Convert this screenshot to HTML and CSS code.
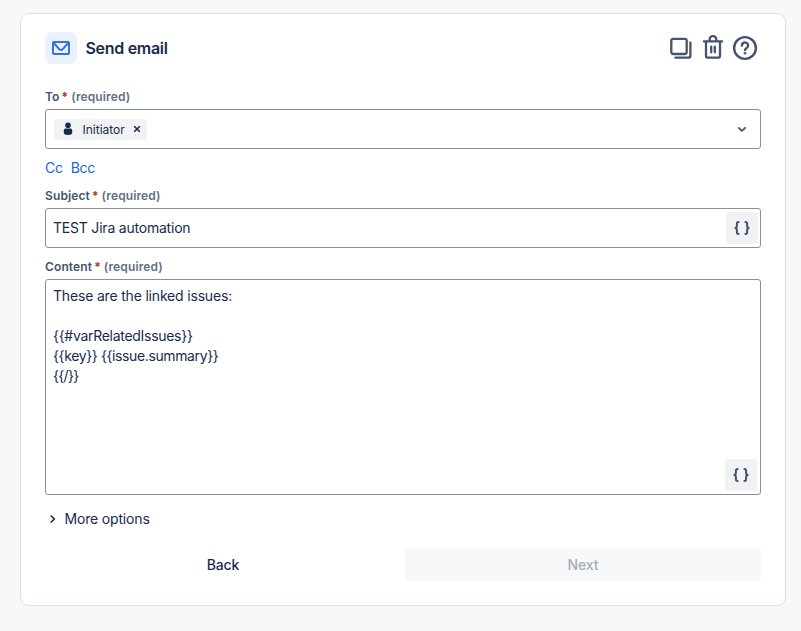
FILE: index.html
```html
<!DOCTYPE html>
<html lang="en">
<head>
<meta charset="utf-8">
<title>Send email</title>
<link rel="stylesheet" href="styles.css">
</head>
<body>
<main class="card">
  <header class="header">
    <span class="mail">
      <svg width="20" height="16" viewBox="0 0 20 16" fill="none" stroke="#3a70dc" stroke-width="2" stroke-linejoin="round"><rect x="2" y="2" width="16" height="12" rx="1"/><path d="M2.5 2.8 8.4 9.2Q10 10.7 11.6 9.2L17.5 2.8"/></svg>
    </span>
    <h1 class="title">Send email</h1>
    <div class="actions">
      <svg width="24" height="24" viewBox="0 0 24 24" fill="none" stroke="#44546f" stroke-width="2.3" stroke-linecap="round" stroke-linejoin="round"><rect x="2.3" y="2.8" width="15.4" height="15.2" rx="2"/><path d="M21.4 6.6V19.5a2.2 2.2 0 0 1-2.2 2.2H6.4"/></svg>
      <svg width="24" height="26" viewBox="0 0 24 26" fill="none" stroke="#44546f" stroke-width="2.3" stroke-linecap="round" stroke-linejoin="round"><path d="M2.9 6.4H21.1M8.7 6V4.2a3 3 0 0 1 3-3h.6a3 3 0 0 1 3 3V6M5 6.6V20.7a2 2 0 0 0 2 2H17a2 2 0 0 0 2-2V6.6M10.2 11.7v5.6M13.8 11.7v5.6"/></svg>
      <svg width="26" height="26" viewBox="0 0 26 26" fill="none" stroke="#44546f" stroke-width="2.4" stroke-linecap="round" stroke-linejoin="round"><circle cx="13" cy="13" r="10.9"/><path d="M9.9 10.6a3.1 3.1 0 1 1 4.8 2.5C13.5 13.8 13 14.1 13 15.1"/><circle cx="13" cy="18.2" r="1.3" fill="#44546f" stroke="none"/></svg>
    </div>
  </header>

  <div class="label">To<b class="star">*</b><span class="req">(required)</span></div>
  <div class="field">
    <span class="tag">
      <svg width="10" height="14" viewBox="0 0 10 14" fill="#172b4d"><circle cx="5" cy="3.2" r="2.8"/><path d="M.8 8.4Q.8 6.6 2.6 6.6h4.8q1.8 0 1.8 1.8v2.1Q9.2 13 5 13T.8 10.5z"/></svg>
      <span class="tag-text">Initiator</span>
      <svg width="8" height="8" viewBox="0 0 8 8" fill="none" stroke="#172b4d" stroke-width="1.6"><path d="m1.2 1.2 5.6 5.6M6.8 1.2 1.2 6.8"/></svg>
    </span>
    <svg class="chevron" width="10" height="8" viewBox="0 0 10 8" fill="none" stroke="#44546f" stroke-width="1.8" stroke-linecap="round" stroke-linejoin="round"><path d="m1.8 2.9 3.2 3 3.2-3"/></svg>
  </div>
  <div class="links"><a>Cc</a><a>Bcc</a></div>

  <div class="label">Subject<b class="star">*</b><span class="req">(required)</span></div>
  <div class="field subject">
    <span class="subject-text">TEST Jira automation</span>
    <span class="braces"><svg width="18" height="16" viewBox="0 0 18 16" fill="none" stroke="#44546f" stroke-width="2"><path d="M6.4 2H5.6Q3.9 2 3.9 3.7v2.2Q3.9 8 1.6 8q2.3 0 2.3 2.1v2.2Q3.9 14 5.6 14h.8M11.6 2h.8q1.7 0 1.7 1.7v2.2Q14.1 8 16.4 8q-2.3 0-2.3 2.1v2.2q0 1.7-1.7 1.7h-.8"/></svg></span>
  </div>

  <div class="label content-label">Content<b class="star">*</b><span class="req">(required)</span></div>
  <div class="area">
    <div class="area-text"><p class="l1">These are the linked issues:</p><p class="l2">{{#varRelatedIssues}}</p><p class="l3">{{key}} {{issue.summary}}</p><p class="l4">{{/}}</p></div>
    <span class="braces"><svg width="18" height="16" viewBox="0 0 18 16" fill="none" stroke="#44546f" stroke-width="2"><path d="M6.4 2H5.6Q3.9 2 3.9 3.7v2.2Q3.9 8 1.6 8q2.3 0 2.3 2.1v2.2Q3.9 14 5.6 14h.8M11.6 2h.8q1.7 0 1.7 1.7v2.2Q14.1 8 16.4 8q-2.3 0-2.3 2.1v2.2q0 1.7-1.7 1.7h-.8"/></svg></span>
  </div>

  <div class="more">
    <svg width="8" height="10" viewBox="0 0 8 10" fill="none" stroke="#172b4d" stroke-width="1.7" stroke-linecap="round" stroke-linejoin="round"><path d="M2.2 2 5.4 5 2.2 8"/></svg>
    <span>More options</span>
  </div>
  <div class="buttons">
    <button class="btn">Back</button>
    <button class="btn next">Next</button>
  </div>
</main>
</body>
</html>
```
FILE: styles.css
```css
* { box-sizing: border-box; }
body {
  margin: 0;
  padding: 13px 15px 0 20px;
  height: 631px;
  overflow: hidden;
  background: #f7f8f9;
  color: #172b4d;
  font: 14px/20px Inter, "Liberation Sans", sans-serif;
}
svg { display: block; flex: none; }
.card {
  height: 593px;
  padding: 18px 24px 0;
  background: #fff;
  border: 1px solid #dcdfe4;
  border-radius: 9px;
}
.header { display: flex; align-items: center; height: 32px; margin-bottom: 25px; }
.mail {
  display: flex;
  align-items: center;
  justify-content: center;
  width: 32px;
  height: 32px;
  margin-right: 8.5px;
  background: #e9f2fe;
  border-radius: 7px;
}
.title { margin: 0; font-size: 16px; line-height: 20px; font-weight: 600; letter-spacing: -0.3px; }
.actions { display: flex; align-items: center; gap: 7px; margin-left: auto; margin-right: 3px; }
.actions svg:first-child { margin-right: 1px; }
.label {
  display: flex;
  height: 16px;
  margin-bottom: 4px;
  color: #44546f;
  font-size: 12px;
  line-height: 16px;
  font-weight: 600;
  letter-spacing: 0.12px;
}
.star { margin: 0 3px 0 2px; color: #ae2e24; font-weight: 600; }
.req { color: #626f86; }
.field {
  display: flex;
  align-items: center;
  height: 40px;
  padding: 0 13px 0 8px;
  border: 1px solid #8c8f97;
  border-radius: 3px;
}
.tag {
  display: flex;
  align-items: center;
  width: 93px;
  height: 21px;
  padding-left: 9px;
  background: #f1f2f4;
  border-radius: 2px;
  font-size: 12px;
}
.tag-text { margin: 1px 8px 0 9.5px; }
.chevron { margin-left: auto; }
.links { display: flex; gap: 8px; margin: 9px 0 10px; height: 20px; color: #1868db; letter-spacing: -0.3px; }
.subject { justify-content: space-between; padding: 0 2px 0 7px; }
.subject-text { letter-spacing: -0.21px; }
.braces {
  display: flex;
  align-items: center;
  justify-content: center;
  width: 32px;
  height: 32px;
  background: #f1f2f4;
  border-radius: 3px;
}
.content-label { margin-top: 11px; }
.area {
  display: flex;
  justify-content: space-between;
  align-items: flex-end;
  height: 216px;
  padding: 6px 3px 3px 7px;
  border: 1px solid #8c8f97;
  border-radius: 3px;
}
.area-text { align-self: flex-start; }
.area-text p { margin: 0; }
.area-text .l1 { margin-bottom: 20px; letter-spacing: -0.18px; }
.area-text .l2 { letter-spacing: -0.29px; }
.area-text .l3 { letter-spacing: -0.38px; }
.area-text .l4 { letter-spacing: -0.7px; }
.more { display: flex; align-items: center; gap: 7.5px; height: 20px; margin: 14px 0 20px; padding-left: 4px; letter-spacing: -0.17px; }
.buttons { display: grid; grid-template-columns: 1fr 1fr; gap: 4px; }
.btn {
  height: 32px;
  padding: 0;
  border: 0;
  border-radius: 3px;
  background: transparent;
  color: #172b4d;
  font: 500 14px/20px Inter, "Liberation Sans", sans-serif;
  letter-spacing: -0.1px;
}
.next { background: #f7f8f9; color: #a5adba; }
```
